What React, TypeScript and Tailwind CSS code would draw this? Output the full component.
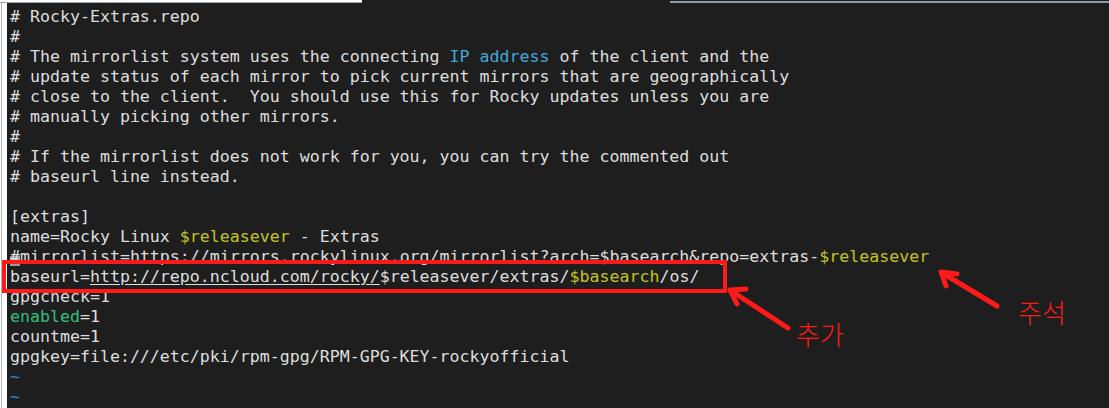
const mono = { fontFamily: '"DejaVu Sans Mono", "Liberation Mono", monospace' };

function Y({ children }: { children: React.ReactNode }) {
  return <span className="text-[#c4c41c]">{children}</span>;
}

export default function App() {
  return (
    <div className="relative w-[1109px] h-[408px] overflow-hidden bg-[#1e1e1e] flex flex-col">
      {/* window top edge */}
      <div className="h-[3px] flex shrink-0">
        <div className="w-[362px] bg-white border-b border-[#9aa3ad]" />
        <div className="w-[308px]" />
        <div className="flex-1 border-b-2 border-[#8e9aa8]" />
      </div>

      <div className="flex flex-1">
        {/* left window edge */}
        <div className="w-[7px] bg-white flex">
          <div className="ml-[1px] w-[1px] bg-[#b5b5b5]" />
        </div>

        <div
          className="pl-[3px] pt-[4px] text-[16.6px] leading-[20px] text-[#dedede] whitespace-pre"
          style={mono}
        >
          <div># Rocky-Extras.repo</div>
          <div>#</div>
          <div>
            # The mirrorlist system uses the connecting{" "}
            <span className="text-[#3fa9dc]">IP address</span> of the client and the
          </div>
          <div># update status of each mirror to pick current mirrors that are geographically</div>
          <div># close to the client.  You should use this for Rocky updates unless you are</div>
          <div># manually picking other mirrors.</div>
          <div>#</div>
          <div># If the mirrorlist does not work for you, you can try the commented out</div>
          <div># baseurl line instead.</div>
          <div>&nbsp;</div>
          <div>[extras]</div>
          <div>
            name=Rocky Linux <Y>$releasever</Y> - Extras
          </div>
          <div>
            <span className="relative">
              <span className="absolute left-0 right-0 bottom-0 h-[10px] bg-[#9a9a9a]" />
              <span className="relative">#</span>
            </span>
            mirrorlist=https://mirrors.rockylinux.org/mirrorlist?arch=$basearch&amp;repo=extras-
            <Y>$releasever</Y>
          </div>
          <div>
            baseurl=<span className="underline underline-offset-2">http://repo.ncloud.com/rocky/</span>
            $releasever/extras/<Y>$basearch</Y>/os/
          </div>
          <div>gpgcheck=1</div>
          <div>
            <span className="text-[#2ec27e]">enabled</span>=1
          </div>
          <div>countme=1</div>
          <div>gpgkey=file:///etc/pki/rpm-gpg/RPM-GPG-KEY-rockyofficial</div>
          <div className="text-[#2b8fd9]">~</div>
          <div className="text-[#2b8fd9]">~</div>
        </div>
      </div>

      {/* annotations */}
      <div className="absolute left-[2px] top-[260px] w-[725px] h-[33px] border-4 border-[#ff1a1a]" />

      <svg className="absolute left-0 top-0" width="1109" height="408" viewBox="0 0 1109 408">
        <g stroke="#ff1a1a" strokeWidth="5" strokeLinecap="round" strokeLinejoin="round" fill="none">
          <line x1="788" y1="328" x2="733" y2="292" />
          <polyline points="746,289 730,290 737,304" />
          <line x1="997" y1="306" x2="944" y2="274" />
          <polyline points="957,274 941,272 946,286" />
        </g>
      </svg>

      <div
        className="absolute left-[796px] top-[321px] text-[26px] leading-none font-light text-[#ff1a1a]"
        style={{ fontFamily: '"Noto Sans CJK KR", sans-serif' }}
      >
        추가
      </div>
      <div
        className="absolute left-[1018px] top-[299px] text-[26px] leading-none font-light text-[#ff1a1a]"
        style={{ fontFamily: '"Noto Sans CJK KR", sans-serif' }}
      >
        주석
      </div>
    </div>
  );
}
